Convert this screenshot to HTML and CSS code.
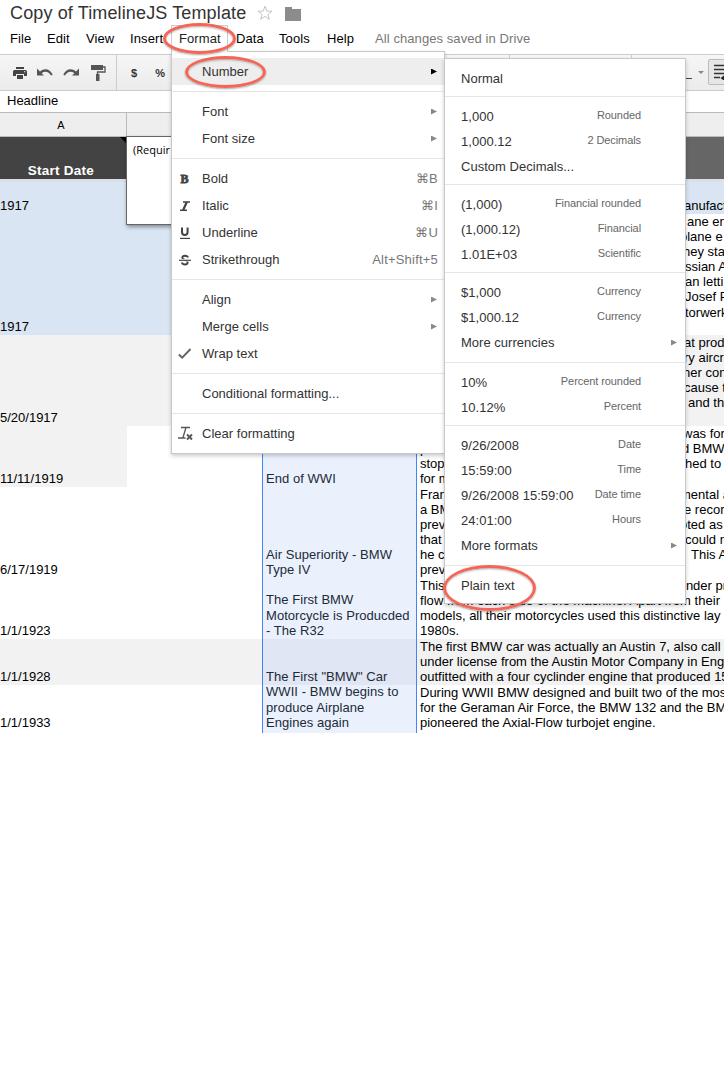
FILE: index.html
```html
<!DOCTYPE html>
<html lang="en">
<head>
<meta charset="utf-8">
<title>Copy of TimelineJS Template</title>
<link rel="stylesheet" href="styles.css">
</head>
<body>
<header class="titlebar">
  <h1 class="title">Copy of TimelineJS Template</h1>
  <svg class="star" width="16" height="16" viewBox="0 0 16 16"><path d="M8 1.200l1.800 4.900 5.200.1-4.100 3.100 1.500 5L8 11.300l-4.400 3 1.500-5L1 6.200l5.200-.1z" fill="none" stroke="#c4c4c4"/></svg>
  <svg class="folder" width="16" height="14" viewBox="0 0 16 14"><path d="M0 0h7v2H16v12H0z" fill="#8c8c8c"/></svg>
</header>
<nav class="menubar">
  <span class="m-file">File</span><span class="m-edit">Edit</span><span class="m-view">View</span><span class="m-insert">Insert</span><span class="m-format"></span><span class="m-data">Data</span><span class="m-tools">Tools</span><span class="m-help">Help</span><span class="saved">All changes saved in Drive</span>
</nav>
<div class="toolbar">
  <div class="tools">
    <svg width="14" height="12" viewBox="0 0 14 12"><path fill="#444" d="M3 0h8v2H3zM1.500 3h11Q14 3 14 4.500V9h-3V7H3v2H0V4.500Q0 3 1.500 3zM4 8h6v4H4z"/><path fill="#eee" d="M11 4.300h1.300v1H11z"/></svg>
    <svg width="16" height="12" viewBox="0 0 16 12"><path d="M0 1.500v7h7L4.600 6.200C8 3.600 12 4.500 14 8.500l1.700-.7C13.500 2 7.500.500 3 4.400z" fill="#555"/></svg>
    <svg width="16" height="12" viewBox="0 0 16 12"><path d="M16 1.500v7H9l2.400-2.300C8 3.600 4 4.500 2 8.500L.3 7.800C2.500 2 8.500.500 13 4.400z" fill="#555"/></svg>
    <svg width="15" height="16" viewBox="0 0 15 16"><path d="M0 0h12v5H0z" fill="#555"/><path d="M12 2h2v5H6.500V10" fill="none" stroke="#555" stroke-width="1.300"/><path d="M5 9h3.500v7H5z" fill="#555"/></svg>
  </div>
  <div class="numtools"><b>$</b><b>%</b></div>
  <div class="tick tick-a"></div>
  <div class="tick tick-b"></div>
  <div class="endtools">
    <i class="underscore"></i><i class="drop"></i>
    <div class="wrapbtn"><svg width="14" height="16" viewBox="0 0 14 16"><path d="M0 1.500h14M0 5.500h14M0 9.500h14M0 13.500h6" stroke="#333" stroke-width="1.300"/><path d="M6.500 14l4-3v6z" fill="#222"/></svg></div>
  </div>
</div>
<div class="formula">Headline</div>

<main class="sheet">
  <div class="row letters"><div class="a">A</div><div class="b"></div><div class="c"></div><div class="d"></div></div>
  <div class="row heads"><div class="a">Start Date</div><div class="b"></div><div class="c"></div><div class="d"></div></div>
  <div class="freeze"></div>
  <div class="row r1 blue"><div class="a">1917</div><div class="b"></div><div class="c"></div>
    <div class="d"><p><i></i><span>anufact</span></p></div></div>
  <div class="row r2"><div class="a tint">1917</div><div class="b tint"></div><div class="c"></div>
    <div class="d"><p><i></i><span class="p3">ane en</span></p><p><i></i><span class="n4">plane e</span></p><p><i></i><span class="n1">hey sta</span></p><p><i></i><span class="p1">ssian A</span></p><p><i></i><span class="p1">an letti</span></p><p><i></i><span class="p1">Josef P</span></p><p><i></i><span class="p1">torwerk</span></p><p></p></div></div>
  <div class="row r3 grey"><div class="a">5/20/1917</div><div class="b"></div><div class="c"></div>
    <div class="d"><p><i></i><span>at produ</span></p><p><i></i><span>ry aircra</span></p><p><i></i><span class="n1">her con</span></p><p><i></i><span>cause t</span></p><p><i></i><span class="p4">and th</span></p><p></p></div></div>
  <div class="row r4"><div class="a dim">11/11/1919</div><div class="b"></div><div class="c">End of WWI</div>
    <div class="d"><p><i></i><span class="n1">was forc</span></p><p><i>pro</i><span class="n2">d BMW</span></p><p><i>stop</i><span class="p1">hed to</span></p><p><i>for m</i></p></div></div>
  <div class="row r5"><div class="a">6/17/1919</div><div class="b"></div><div class="c">Air Superiority - BMW<br>Type IV</div>
    <div class="d"><p><i>Fran</i><span class="n4">mental a</span></p><p><i>a BM</i><span>e record</span></p><p><i>prev</i><span class="n4">oted as</span></p><p><i>that</i><span class="p1">could n</span></p><p><i>he c</i><span class="p6">This A</span></p><p><i>prev</i></p></div></div>
  <div class="row r6"><div class="a">1/1/1923</div><div class="b"></div><div class="c">The First BMW<br>Motorcycle is Producded<br>- The R32</div>
    <div class="d"><p><i>This</i><span class="n1">inder pr</span></p><p class="roomy">flow from each side of the machine. Apart from their</p><p>models, all their motorcycles used this distinctive lay</p><p>1980s.</p></div></div>
  <div class="row r7 grey"><div class="a">1/1/1928</div><div class="b"></div><div class="c">The First "BMW" Car</div>
    <div class="d"><p>The first BMW car was actually an Austin 7, also call</p><p>under license from the Austin Motor Company in Eng</p><p>outfitted with a four cyclinder engine that produced 15</p></div></div>
  <div class="row r8"><div class="a">1/1/1933</div><div class="b"></div><div class="c">WWII - BMW begins to<br>produce Airplane<br>Engines again</div>
    <div class="d"><p>During WWII BMW designed and built two of the mos</p><p>for the Geraman Air Force, the BMW 132 and the BM</p><p>pioneered the Axial-Flow turbojet engine.</p></div></div>
</main>

<div class="corner"></div>
<aside class="note">(Requir</aside>

<div class="tab">Format</div>
<section class="menu">
  <div class="item active"><span>Number</span><i class="arrow"></i></div>
  <hr>
  <div class="item"><span>Font</span><i class="arrow"></i></div>
  <div class="item"><span>Font size</span><i class="arrow"></i></div>
  <hr>
  <div class="item"><b class="ico heavy">B</b><span>Bold</span><kbd>⌘B</kbd></div>
  <div class="item"><svg class="ico" width="14" height="12" viewBox="0 0 14 12"><path d="M5 2h7M2 10.200h7" stroke="#444" stroke-width="1.500"/><path d="M8.800 2L5.200 10" stroke="#444" stroke-width="2.200"/></svg><span>Italic</span><kbd>⌘I</kbd></div>
  <div class="item"><svg class="ico" width="14" height="14" viewBox="0 0 14 14"><path d="M4 1.500V6Q4 9 6.800 9T9.600 6V1.500" fill="none" stroke="#444" stroke-width="2"/><path d="M2 12.400h10" stroke="#444" stroke-width="1.200"/></svg><span>Underline</span><kbd>⌘U</kbd></div>
  <div class="item"><svg class="ico" width="14" height="14" viewBox="0 0 14 14"><path d="M10 4.600Q9.500 2.700 7 2.700T4.300 4.700Q4.300 6 7 7T9.700 9.300Q9.500 11.500 7 11.500T3.900 9.400" fill="none" stroke="#444" stroke-width="1.900"/><path d="M1 7.300h12" stroke="#fff" stroke-width="2.500"/><path d="M1 7.300h12" stroke="#444" stroke-width="1.200"/></svg><span>Strikethrough</span><kbd>Alt+Shift+5</kbd></div>
  <hr>
  <div class="item"><span>Align</span><i class="arrow"></i></div>
  <div class="item"><span>Merge cells</span><i class="arrow"></i></div>
  <div class="item"><svg class="ico" width="14" height="12" viewBox="0 0 14 12"><path d="M.8 6.500l3.400 3.200L12.500 1" fill="none" stroke="#666" stroke-width="2"/></svg><span>Wrap text</span></div>
  <hr>
  <div class="item"><span class="wide">Conditional formatting...</span></div>
  <hr>
  <div class="item"><svg class="ico clear" width="17" height="15" viewBox="0 0 17 15"><path d="M3 1.500h9M8 1.500L5 11.500M0 12h7.500" fill="none" stroke="#555" stroke-width="1.300"/><path d="M9 8.500l5 5M14 8.500l-5 5" stroke="#555" stroke-width="1.900"/></svg><span>Clear formatting</span></div>
</section>

<section class="submenu">
  <div class="item"><span>Normal</span></div>
  <hr>
  <div class="item"><span>1,000</span><small>Rounded</small></div>
  <div class="item"><span>1,000.12</span><small>2 Decimals</small></div>
  <div class="item"><span>Custom Decimals...</span></div>
  <hr>
  <div class="item"><span>(1,000)</span><small>Financial rounded</small></div>
  <div class="item"><span>(1,000.12)</span><small>Financial</small></div>
  <div class="item"><span>1.01E+03</span><small>Scientific</small></div>
  <hr>
  <div class="item"><span>$1,000</span><small>Currency</small></div>
  <div class="item"><span>$1,000.12</span><small>Currency</small></div>
  <div class="item more"><span>More currencies</span><i class="arrow"></i></div>
  <hr>
  <div class="item"><span>10%</span><small>Percent rounded</small></div>
  <div class="item"><span>10.12%</span><small>Percent</small></div>
  <hr>
  <div class="item"><span>9/26/2008</span><small>Date</small></div>
  <div class="item"><span>15:59:00</span><small>Time</small></div>
  <div class="item"><span>9/26/2008 15:59:00</span><small>Date time</small></div>
  <div class="item"><span>24:01:00</span><small>Hours</small></div>
  <div class="item more"><span>More formats</span><i class="arrow"></i></div>
  <hr>
  <div class="item"><span>Plain text</span></div>
</section>

<div class="ring ring-format"></div>
<div class="ring ring-number"></div>
<div class="ring ring-plain"></div>
</body>
</html>
```
FILE: styles.css
```css
* { box-sizing: border-box; }
body {
  margin: 0;
  width: 724px;
  height: 1088px;
  position: relative;
  overflow: hidden;
  background: #fff;
  color: #000;
  font: 13px "Liberation Sans", Arial, sans-serif;
}
p { margin: 0; }
i { font-style: normal; }

.titlebar { display: flex; height: 26px; padding-left: 10px; }
.title { margin: 0; width: 247px; font-size: 18px; font-weight: 400; line-height: 26px; color: #333; white-space: nowrap; letter-spacing: .13px; }
.star { margin-top: 5px; }
.folder { margin: 7px 0 0 12px; }

.menubar { display: flex; height: 28px; line-height: 25px; padding-left: 10px; white-space: nowrap; letter-spacing: .1px; }
.menubar span { flex: none; }
.m-file { width: 37px; }
.m-edit { width: 39px; }
.m-view { width: 44px; }
.m-insert { width: 49px; }
.m-format { width: 57px; }
.m-data { width: 43px; }
.m-tools { width: 48px; }
.m-help { width: 48px; }
.saved { color: #777; letter-spacing: .08px; }

.toolbar {
  display: flex;
  height: 37px;
  overflow: hidden;
  border-top: 1px solid #ccc;
  border-bottom: 1px solid #ccc;
  background: linear-gradient(#f6f6f6, #ebebeb);
}
.toolbar > div { flex: none; }
.tools { display: flex; align-items: center; gap: 10px; width: 117px; padding-left: 13px; border-right: 1px solid #ccc; }
.tools svg { flex: none; }
.tools svg:last-child { margin-left: 2px; }
.numtools { display: flex; align-items: center; gap: 18px; width: 392px; padding-left: 14px; font-size: 11px; color: #333; }
.tick { width: 1px; background: #ccc; }
.tick-b { margin-left: 121px; }
.endtools { display: flex; margin-left: 53px; }
.underscore { width: 7px; height: 1px; margin-top: 23px; background: #444; }
.drop { width: 6px; height: 3px; margin: 16px 4px 0 6px; background: #888; clip-path: polygon(0 0, 100% 0, 50% 100%); }
.wrapbtn { width: 28px; height: 26px; flex: none; padding: 4px 5px; margin-top: 4px; border: 1px solid #bbb; border-radius: 2px; background: #e6e6e6; }

.formula { height: 21px; padding-left: 7px; line-height: 20px; }

.row { display: grid; grid-template-columns: 127px 135px 155px 307px; white-space: nowrap; line-height: 15.200px; }
.row > div { overflow: hidden; }
.a, .c { display: flex; flex-direction: column; justify-content: flex-end; }
.a { padding-bottom: 1px; }
.c { padding: 0 0 1px 3px; border: solid #4286f5; border-width: 0 1px; background: #eaf1fd; color: #222a38; letter-spacing: .05px; }
.d { padding: 0 0 0 3px; }
.d p { display: flex; height: 15.100px; }
.d i { width: 264px; flex: none; }
.roomy { letter-spacing: .06px; }
.n4 { margin-left: -4px; }
.n2 { margin-left: -2px; }
.n1 { margin-left: -1px; }
.p1 { margin-left: 1px; }
.p3 { margin-left: 3px; }
.p4 { margin-left: 4px; }
.p6 { margin-left: 7px; }
.letters { height: 25px; border: solid #bbb; border-width: 1px 0; background: #eee; }
.letters .a { display: block; border-right: 1px solid #bbb; padding-right: 4px; font-size: 11px; line-height: 24px; text-align: center; }
.letters .c, .heads .c { border: 0; background: none; }
.heads { height: 42px; background: #666; }
.heads .a { padding: 0 5px 1px 0; font-size: 13.500px; font-weight: 700; color: #fff; background: #434343; text-align: center; letter-spacing: .25px; }
.freeze { height: 3px; background: #dadfe6; }
.blue, .tint { background: #d9e5f3; }
.grey, .dim { background: #f2f2f2; }
.r1 { height: 32px; }
.r1 .d { padding-top: 16px; }
.r2 { height: 121px; }
.r3, .r5 { height: 91px; }
.r4, .r6 { height: 61px; }
.r7 { height: 46px; }
.r8 { height: 48px; }
.r8 .a, .r8 .c { padding-bottom: 3px; }
.grey .c { background: #e0e6f3; }

.corner { position: absolute; left: 120px; top: 137px; border-top: 6px solid #000; border-left: 6px solid transparent; }
.note {
  position: absolute; left: 126px; top: 136px; width: 80px; height: 89px;
  padding: 6px 6px; border: 1px solid #666; background: #fff;
  box-shadow: 1px 2px 4px rgba(0,0,0,.4);
  font: 11px/14px "Open Sans", "Noto Sans", sans-serif;
}

.menu, .submenu { position: absolute; border: 1px solid #c8c8c8; background: #fff; color: #333; box-shadow: 0 2px 4px rgba(0,0,0,.2); padding: 6px 0; }
.menu { left: 171px; top: 51px; width: 274px; height: 403px; }
.submenu { left: 444px; top: 58px; width: 242px; height: 546px; }
.tab { position: absolute; z-index: 2; left: 171px; top: 25px; width: 57px; height: 27px; padding-left: 7px; border: 1px solid #ccc; border-bottom: 0; background: #fff; color: #222; line-height: 26px; letter-spacing: .1px; }
hr { height: 1px; margin: 6px 0; border: 0; background: #e5e5e5; }
.item { display: flex; align-items: center; height: 27px; padding: 0 6px 0 30px; letter-spacing: .02px; white-space: nowrap; }
.submenu .item { height: 25px; padding: 2px 8px 0 16px; }
.submenu .more { height: 27px; padding-top: 0; }
.wide { letter-spacing: 0; }
.active { background: #eee; }
.arrow { width: 6px; height: 6px; margin-left: auto; background: #888; clip-path: polygon(0 0, 100% 50%, 0 100%); }
.menu .arrow { margin-right: 1px; }
.active .arrow { background: #000; }
kbd { margin-left: auto; font: inherit; letter-spacing: .2px; color: #777; }
small { margin: -4px 36px 0 auto; font-size: 11px; letter-spacing: -.08px; color: #666; }
.ico { width: 14px; flex: none; margin: 0 10px 0 -24px; }
b.ico { color: #444; font-size: 12px; line-height: 12px; text-align: center; padding-right: 1px; }
.heavy { font-family: "Liberation Serif", serif; -webkit-text-stroke: .8px #444; }
.clear { width: 17px; margin-right: 7px; }

.ring { position: absolute; z-index: 3; border: 3px solid #f56555; border-radius: 50%; box-shadow: 0 1px 2px rgba(0,0,0,.35), inset 0 1px 2px rgba(0,0,0,.3); }
.ring-format { left: 163px; top: 23px; width: 73px; height: 31px; }
.ring-number { left: 185px; top: 56px; width: 81px; height: 32px; }
.ring-plain { left: 443px; top: 565px; width: 93px; height: 46px; }
```
